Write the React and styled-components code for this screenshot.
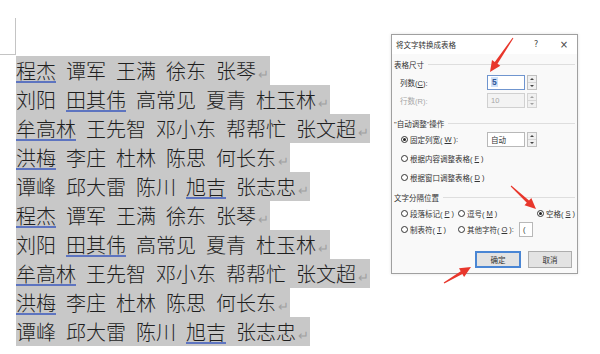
import React from 'react'
import styled, { createGlobalStyle } from 'styled-components'

const GlobalStyle = createGlobalStyle`
  html, body { margin: 0; padding: 0; background: #fff; }
  body { width: 600px; height: 354px; overflow: hidden; }
`

const Page = styled.div`
  position: relative;
  width: 600px;
  height: 354px;
  display: flex;
  align-items: flex-start;
`

const DocColumn = styled.div`
  width: 391px;
  padding-top: 18px;
  display: flex;
  flex-direction: column;
  align-items: flex-start;
`

const CornerMark = styled.div`
  width: 16px;
  height: 37px;
  box-sizing: border-box;
  border-right: 1px solid #c4c4c4;
  border-bottom: 1px solid #c4c4c4;
  margin-bottom: 1px;
`

const Line = styled.div`
  margin-left: 16px;
  display: flex;
  align-items: baseline;
  gap: 10px;
  height: 29px;
  line-height: 29px;
  background: #c8c8c8;
  font-family: "Noto Sans CJK SC", sans-serif;
  font-weight: 300;
  font-size: 20px;
  color: #1f1f1f;
`

const Word = styled.span`
  text-decoration: ${({ $flag }) => ($flag ? 'underline' : 'none')};
  text-decoration-color: #5d74c0;
  text-decoration-thickness: 2px;
  text-underline-offset: 2px;
`

const ParaMark = styled.span`
  margin-left: -8px;
  padding-right: 1px;
  font-family: "DejaVu Sans", sans-serif;
  font-size: 13px;
  color: #a0a0a0;
`

const Dialog = styled.div`
  margin-top: 34px;
  width: 187px;
  height: 240px;
  box-sizing: border-box;
  border: 1px solid #a0a0a0;
  background: #f9f9f9;
  box-shadow: 0 0 3px rgba(0, 0, 0, 0.12);
  display: flex;
  flex-direction: column;
  font-family: "Liberation Sans", "Noto Sans CJK SC", sans-serif;
  font-size: 7.5px;
  color: #333;
`

const TitleBar = styled.div`
  height: 19px;
  display: flex;
  align-items: center;
  padding-left: 4px;
  padding-right: 5px;
  background: #fff;
`

const Title = styled.div`
  flex: 1;
`

const TitleButton = styled.div`
  width: 16px;
  text-align: center;
  font-family: "DejaVu Sans", sans-serif;
  font-size: ${({ $size }) => $size}px;
  color: #444;
  margin-left: ${({ $gap }) => $gap || 0}px;
`

const Body = styled.div`
  flex: 1;
  display: flex;
  flex-direction: column;
  padding: 3px 2px 0;
`

const GroupHeader = styled.div`
  height: 14px;
  display: flex;
  align-items: center;
  gap: 4px;
  margin-top: ${({ $mt }) => $mt || 0}px;
  &::after {
    content: '';
    flex: 1;
    height: 1px;
    background: #dedede;
  }
`

const FieldRow = styled.div`
  height: ${({ $h }) => $h || 18}px;
  display: grid;
  grid-template-columns: ${({ $radio }) => ($radio ? '86px' : '87px')} auto;
  align-items: center;
  padding-left: ${({ $radio }) => ($radio ? 7 : 6)}px;
  margin-top: ${({ $mt }) => $mt || 0}px;
  color: ${({ $disabled }) => ($disabled ? '#a6a6a6' : '#333')};
`

const OptionRow = styled.div`
  height: ${({ $h }) => $h || 19}px;
  display: grid;
  grid-template-columns: ${({ $cols }) => $cols || 'auto'};
  align-items: center;
  padding-left: 7px;
  margin-top: ${({ $mt }) => $mt || 0}px;
`

const Option = styled.label`
  display: flex;
  align-items: center;
  gap: 2px;
  white-space: nowrap;
`

const Radio = styled.span`
  width: 7px;
  height: 7px;
  box-sizing: border-box;
  border: 1px solid #333;
  border-radius: 50%;
  display: flex;
  align-items: center;
  justify-content: center;
  background: #fff;
  &::after {
    content: '';
    width: 3px;
    height: 3px;
    border-radius: 50%;
    background: ${({ $on }) => ($on ? '#222' : 'transparent')};
  }
`

const Key = styled.span`
  text-decoration: underline;
  text-underline-offset: 1px;
`

const SpinField = styled.div`
  display: flex;
  align-items: center;
  gap: 2px;
`

const TextBox = styled.div`
  width: ${({ $w }) => $w || 38}px;
  height: 15px;
  box-sizing: border-box;
  border: 1px solid ${({ $focus, $disabled }) => ($focus ? '#6f95cf' : $disabled ? '#d0d0d0' : '#b8b8b8')};
  background: ${({ $disabled }) => ($disabled ? '#f3f3f3' : '#fff')};
  color: ${({ $disabled }) => ($disabled ? '#a6a6a6' : '#333')};
  display: flex;
  align-items: center;
  padding-left: 3px;
  margin-left: ${({ $ml }) => $ml || 0}px;
`

const Selected = styled.span`
  background: #cfe1f8;
  color: #2f5597;
  font-size: 8.5px;
  font-weight: bold;
  line-height: 10px;
  padding: 0 1px;
`

const Spinner = styled.div`
  width: 10px;
  height: 15px;
  box-sizing: border-box;
  border: 1px solid ${({ $disabled }) => ($disabled ? '#d4d4d4' : '#c0c0c0')};
  background: #f0f0f0;
  display: flex;
  flex-direction: column;
`

const SpinHalf = styled.div`
  flex: 1;
  display: flex;
  align-items: center;
  justify-content: center;
  border-top: ${({ $lower }) => ($lower ? '1px solid #d6d6d6' : 'none')};
  &::after {
    content: '';
    border-left: 2px solid transparent;
    border-right: 2px solid transparent;
    ${({ $lower, $disabled }) =>
      $lower
        ? `border-top: 2px solid ${$disabled ? '#a0a0a0' : '#444'};`
        : `border-bottom: 2px solid ${$disabled ? '#a0a0a0' : '#444'};`}
  }
`

const ButtonRow = styled.div`
  display: flex;
  justify-content: flex-end;
  gap: 7px;
  margin-top: 14px;
  padding-right: 3px;
`

const Button = styled.div`
  width: ${({ $w }) => $w}px;
  height: 17px;
  box-sizing: border-box;
  border: ${({ $primary }) => ($primary ? '2px solid #4a86d4' : '1px solid #adadad')};
  background: #e3e3e3;
  display: flex;
  align-items: center;
  justify-content: center;
  color: #333;
`

const Overlay = styled.svg`
  position: absolute;
  left: 0;
  top: 0;
  pointer-events: none;
`

const rows = [
  [['程杰', 1], '谭军', '王满', '徐东', '张琴'],
  ['刘阳', ['田其伟', 1], '高常见', '夏青', '杜玉林'],
  [['牟高林', 1], '王先智', '邓小东', '帮帮忙', '张文超'],
  [['洪梅', 1], '李庄', '杜林', '陈思', '何长东'],
  ['谭峰', '邱大雷', '陈川', ['旭吉', 1], '张志忠'],
]

const arrows = [
  [[513, 38], [490, 72]],
  [[511, 186], [536, 209]],
  [[444, 283], [471, 267]],
]

// tapered shaft with a triangular head, tail -> tip
const arrowPoints = ([tx, ty], [px, py]) => {
  const len = Math.hypot(px - tx, py - ty)
  const dx = (px - tx) / len
  const dy = (py - ty) / len
  const nx = -dy
  const ny = dx
  const bx = px - dx * 11
  const by = py - dy * 11
  const pts = [
    [tx + nx * 0.5, ty + ny * 0.5],
    [bx + nx * 1.6, by + ny * 1.6],
    [bx + nx * 5, by + ny * 5],
    [px, py],
    [bx - nx * 5, by - ny * 5],
    [bx - nx * 1.6, by - ny * 1.6],
    [tx - nx * 0.5, ty - ny * 0.5],
  ]
  return pts.map(p => p.map(v => v.toFixed(1)).join(',')).join(' ')
}

const Spin = ({ disabled }) => (
  <Spinner $disabled={disabled}>
    <SpinHalf $disabled={disabled} />
    <SpinHalf $lower $disabled={disabled} />
  </Spinner>
)

const App = () => {
  const lines = [...rows, ...rows]
  return (
    <Page>
      <GlobalStyle />
      <DocColumn>
        <CornerMark />
        {lines.map((row, i) => (
          <Line key={i}>
            {row.map((w, j) =>
              Array.isArray(w) ? (
                <Word key={j} $flag>{w[0]}</Word>
              ) : (
                <Word key={j}>{w}</Word>
              )
            )}
            <ParaMark>↵</ParaMark>
          </Line>
        ))}
      </DocColumn>

      <Dialog>
        <TitleBar>
          <Title>将文字转换成表格</Title>
          <TitleButton $size={8}>?</TitleButton>
          <TitleButton $size={10} $gap={12}>×</TitleButton>
        </TitleBar>
        <Body>
          <GroupHeader>表格尺寸</GroupHeader>
          <FieldRow $mt={2}>
            <span>列数(<Key>C</Key>):</span>
            <SpinField>
              <TextBox $focus><Selected>5</Selected></TextBox>
              <Spin />
            </SpinField>
          </FieldRow>
          <FieldRow $disabled>
            <span>行数(R):</span>
            <SpinField>
              <TextBox $disabled>10</TextBox>
              <Spin disabled />
            </SpinField>
          </FieldRow>

          <GroupHeader $mt={7}>"自动调整"操作</GroupHeader>
          <FieldRow $radio $h={19}>
            <Option><Radio $on />固定列宽(<Key>W</Key>):</Option>
            <SpinField>
              <TextBox>自动</TextBox>
              <Spin />
            </SpinField>
          </FieldRow>
          <OptionRow>
            <Option><Radio />根据内容调整表格(<Key>F</Key>)</Option>
          </OptionRow>
          <OptionRow>
            <Option><Radio />根据窗口调整表格(<Key>D</Key>)</Option>
          </OptionRow>

          <GroupHeader $mt={3}>文字分隔位置</GroupHeader>
          <OptionRow $h={16} $mt={1} $cols="57px 79px auto">
            <Option><Radio />段落标记(<Key>P</Key>)</Option>
            <Option><Radio />逗号(<Key>M</Key>)</Option>
            <Option><Radio $on />空格(<Key>S</Key>)</Option>
          </OptionRow>
          <OptionRow $h={16} $cols="57px auto">
            <Option><Radio />制表符(<Key>T</Key>)</Option>
            <Option>
              <Radio />其他字符(<Key>O</Key>):
              <TextBox $w={14} $ml={3}>(</TextBox>
            </Option>
          </OptionRow>

          <ButtonRow>
            <Button $primary $w={46}>确定</Button>
            <Button $w={44}>取消</Button>
          </ButtonRow>
        </Body>
      </Dialog>

      <Overlay width="600" height="354" viewBox="0 0 600 354">
        {arrows.map(([t, p], i) => (
          <polygon key={i} points={arrowPoints(t, p)} fill="#e8372c" />
        ))}
      </Overlay>
    </Page>
  )
}

export default App
